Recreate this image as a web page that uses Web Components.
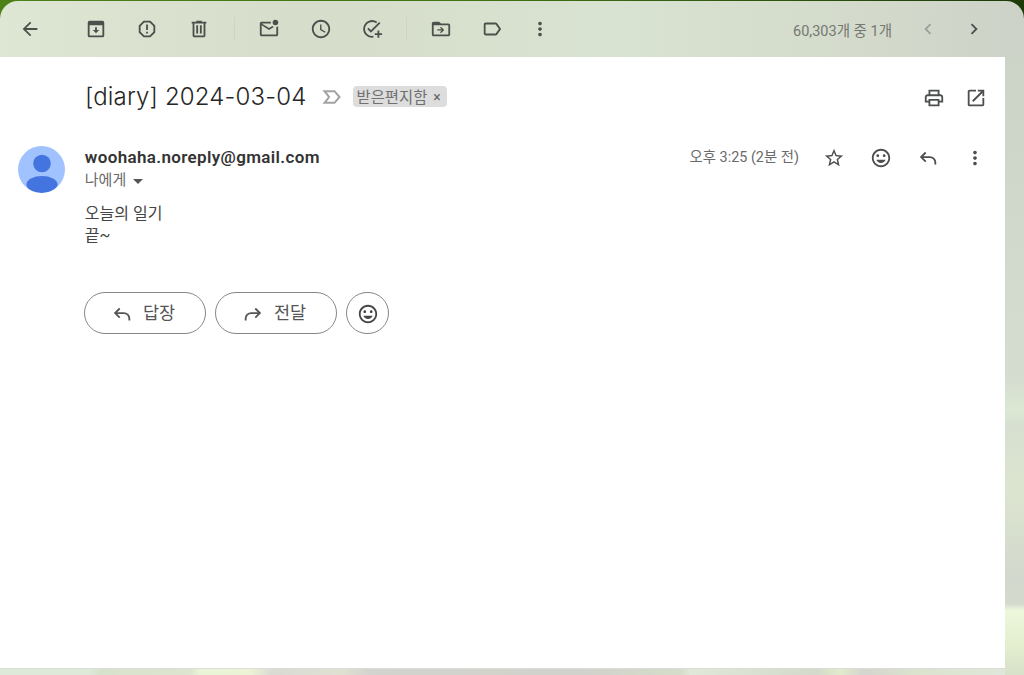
<!DOCTYPE html>
<html lang="ko">
<head>
<meta charset="utf-8">
<title>[diary] 2024-03-04</title>
<style>
  html,body{margin:0;padding:0;height:100%;overflow:hidden}
  body{font-family:Roboto,"Noto Sans CJK KR",sans-serif}
</style>
</head>
<body>
<mail-app>
  <mail-toolbar slot="toolbar">
    <icon-btn name="back" width="40" style="margin-right:20px"></icon-btn>
    <icon-btn name="archive"></icon-btn>
    <icon-btn name="report"></icon-btn>
    <icon-btn name="trash"></icon-btn>
    <tool-sep></tool-sep>
    <icon-btn name="unread"></icon-btn>
    <icon-btn name="clock"></icon-btn>
    <icon-btn name="task"></icon-btn>
    <tool-sep style="margin:0 8px"></tool-sep>
    <icon-btn name="move"></icon-btn>
    <icon-btn name="label"></icon-btn>
    <icon-btn name="more" width="43"></icon-btn>
    <page-count slot="right">60,303개 중 1개</page-count>
    <icon-btn slot="right" name="prev" width="46" faded></icon-btn>
    <icon-btn slot="right" name="next" width="46"></icon-btn>
  </mail-toolbar>

  <mail-subject slot="card">
    [diary] 2024-03-04
    <label-chip slot="chip">받은편지함</label-chip>
    <icon-btn slot="actions" name="print" width="42"></icon-btn>
    <icon-btn slot="actions" name="open" width="42"></icon-btn>
  </mail-subject>

  <mail-message slot="card" from="woohaha.noreply@gmail.com" to="나에게" time="오후 3:25 (2분 전)">
    <icon-btn slot="actions" name="star" width="47"></icon-btn>
    <icon-btn slot="actions" name="mood" width="47"></icon-btn>
    <icon-btn slot="actions" name="reply" width="47"></icon-btn>
    <icon-btn slot="actions" name="more" width="47"></icon-btn>
    <div>오늘의 일기</div>
    <div>끝~</div>
  </mail-message>

  <reply-bar slot="card">
    <pill-btn icon="reply">답장</pill-btn>
    <pill-btn icon="forward">전달</pill-btn>
    <pill-btn icon="mood"></pill-btn>
  </reply-bar>
</mail-app>

<script>
const ICONS = {
  back:'<path d="M20 11H7.83l5.59-5.59L12 4l-8 8 8 8 1.41-1.41L7.83 13H20v-2z"/>',
  archive:'<path fill-rule="evenodd" d="M5 3h14a2 2 0 0 1 2 2v14a2 2 0 0 1-2 2H5a2 2 0 0 1-2-2V5a2 2 0 0 1 2-2zM5 8v11h14V8z"/><path d="M11 10h2v3h2.5L12 16.5 8.5 13H11z"/>',
  report:'<path d="M15.73 3H8.27L3 8.27v7.46L8.27 21h7.46L21 15.73V8.27L15.73 3zM19 14.9L14.9 19H9.1L5 14.9V9.1L9.1 5h5.8L19 9.1v5.8z"/><path d="M11 7h2v6h-2zM11 15h2v2h-2z"/>',
  trash:'<path d="M15 4V3H9v1H4v2h1v13c0 1.1.9 2 2 2h10c1.1 0 2-.9 2-2V6h1V4h-5zm2 15H7V6h10v13zM9 8h2v9H9zm4 0h2v9h-2z"/>',
  unread:'<path d="M22 8.98V18c0 1.1-.9 2-2 2H4c-1.1 0-2-.9-2-2V6c0-1.1.9-2 2-2h10.1c-.06.32-.1.66-.1 1s.04.68.1 1H4l8 5 3.67-2.29c.47.43 1.02.76 1.63.98L12 13 4 8v10h16V9.9c.74-.15 1.42-.48 2-.92z"/><circle cx="19" cy="5" r="3"/>',
  clock:'<path d="M11.99 2C6.47 2 2 6.48 2 12s4.47 10 9.99 10C17.52 22 22 17.52 22 12S17.52 2 11.99 2zM12 20c-4.42 0-8-3.58-8-8s3.58-8 8-8 8 3.58 8 8-3.58 8-8 8zm.5-13H11v6l5.25 3.15.75-1.23-4.5-2.67z"/>',
  task:'<g fill="none" stroke="currentColor" stroke-width="2"><path d="M13.5 20.4a8.6 8.6 0 1 1 3.6-15.4"/><path d="M7.5 11.3l3.3 3.3L20.5 5"/><path d="M19 13.5v8M15 17.5h8"/></g>',
  move:'<path d="M20 6h-8l-2-2H4c-1.1 0-2 .9-2 2v12c0 1.1.9 2 2 2h16c1.1 0 2-.9 2-2V8c0-1.1-.9-2-2-2zm0 12H4V8h16v10z"/><path d="M12 9.5l-1 1 1.8 1.8H8v1.4h4.8L11 15.5l1 1 3.5-3.5z"/>',
  label:'<path d="M17.63 5.84C17.27 5.33 16.67 5 16 5L5 5.01C3.9 5.01 3 5.9 3 7v10c0 1.1.9 1.99 2 1.99L16 19c.67 0 1.27-.33 1.63-.84L22 12l-4.37-6.16zM16 17H5V7h11l3.55 5L16 17z"/>',
  more:'<path d="M12 8c1.1 0 2-.9 2-2s-.9-2-2-2-2 .9-2 2 .9 2 2 2zm0 2c-1.1 0-2 .9-2 2s.9 2 2 2 2-.9 2-2-.9-2-2-2zm0 6c-1.1 0-2 .9-2 2s.9 2 2 2 2-.9 2-2-.9-2-2-2z"/>',
  prev:'<path d="M15.41 7.41L14 6l-6 6 6 6 1.41-1.41L10.83 12z"/>',
  next:'<path d="M10 6L8.59 7.41 13.17 12l-4.58 4.59L10 18l6-6z"/>',
  print:'<path d="M19 8h-1V3H6v5H5c-1.66 0-3 1.34-3 3v6h4v4h12v-4h4v-6c0-1.66-1.34-3-3-3zM8 5h8v3H8V5zm8 12v2H8v-4h8v2zm2-2v-2H6v2H4v-4c0-.55.45-1 1-1h14c.55 0 1 .45 1 1v4h-2z"/>',
  open:'<path d="M19 19H5V5h7V3H5c-1.11 0-2 .9-2 2v14c0 1.1.89 2 2 2h14c1.1 0 2-.9 2-2v-7h-2v7zM14 3v2h3.59l-9.83 9.83 1.41 1.41L19 6.41V10h2V3h-7z"/>',
  star:'<path d="M22 9.24l-7.19-.62L12 2 9.19 8.63 2 9.24l5.46 4.73L5.82 21 12 17.27 18.18 21l-1.63-7.03L22 9.24zM12 15.4l-3.76 2.27 1-4.28-3.32-2.88 4.38-.38L12 6.1l1.71 4.04 4.38.38-3.32 2.88 1 4.28L12 15.4z"/>',
  mood:'<path d="M11.99 2C6.47 2 2 6.48 2 12s4.47 10 9.99 10C17.52 22 22 17.52 22 12S17.52 2 11.99 2zM12 20c-4.42 0-8-3.58-8-8s3.58-8 8-8 8 3.58 8 8-3.58 8-8 8zm3.5-9c.83 0 1.5-.67 1.5-1.5S16.33 8 15.5 8 14 8.67 14 9.5s.67 1.5 1.5 1.5zm-7 0c.83 0 1.5-.67 1.5-1.5S9.33 8 8.5 8 7 8.67 7 9.5 7.67 11 8.5 11zm3.5 6.5c2.33 0 4.31-1.46 5.11-3.5H6.89c.8 2.04 2.78 3.5 5.11 3.5z"/>',
  reply:'<g fill="none" stroke="currentColor" stroke-width="2"><path d="M9.5 6l-5 5 5 5"/><path d="M5 11h9a6 6 0 0 1 6 6v2"/></g>',
  forward:'<g fill="none" stroke="currentColor" stroke-width="2"><path d="M14.5 6l5 5-5 5"/><path d="M19 11h-9a6 6 0 0 0-6 6v2"/></g>'
}

function svgIcon(name,size){
  return `<svg width="${size}" height="${size}" viewBox="0 0 24 24" fill="currentColor">${ICONS[name]}</svg>`
}

class MailApp extends HTMLElement{
  constructor(){
    super()
    this.attachShadow({mode:"open"})
    this.shadowRoot.innerHTML = `
      <style>
        :host{display:block;width:1024px;height:675px;overflow:hidden;
          background:linear-gradient(90deg,#4e8018 0,#3f7014 50%,#1d3a06 100%)}
        .panel{margin-top:1px;height:674px;border-radius:18px 18px 0 0;overflow:hidden;
          display:grid;grid-template-columns:1005px 19px;grid-template-rows:56px 611px 7px;
          background:linear-gradient(90deg,#dee6d4 0,#d6ddca 30%,#d9e3d1 60%,#d3dacb 85%,#cdd2c8 100%)}
        .bar{grid-column:1 / 3}
        .card{background:#fff;display:flex;flex-direction:column}
        .side{background:linear-gradient(180deg,#ccd3c7 0,#d5dcd0 52%,#dbe8d3 57%,#d7dfd0 60%,#dce5cf 70%,#d2d8cd 84%,#d3dacd 88.5%,#ecf7dc 89.5%,#e4efd0 95%,#d7e0c9 100%);grid-row:2 / 4;grid-column:2}
        .bottom{box-shadow:inset 0 1px 0 #dcdcd8;background:linear-gradient(90deg,#dfe9da 0,#dfe9da 90px,#d7e2cd 100px,#dde4cf 190px,#e9f4d8 200px,#ecf3d5 250px,#d9dbd4 272px,#e0e0d2 340px,#d3d3cf 372px,#d3d3cc 497px,#d1d1cd 575px,#d5ddc9 680px,#dfe8d9 690px,#d3dacb 817px,#e2ebcc 840px,#d4d5cf 863px,#dbe3ce 915px,#dfe7da 1005px)}
      </style>
      <div class="panel">
        <div class="bar"><slot name="toolbar"></slot></div>
        <div class="card"><slot name="card"></slot></div>
        <div class="side"></div>
        <div class="bottom"></div>
      </div>`
  }
}
customElements.define("mail-app",MailApp)

class MailToolbar extends HTMLElement{
  constructor(){
    super()
    this.attachShadow({mode:"open"})
    this.shadowRoot.innerHTML = `
      <style>
        :host{display:flex;align-items:center;height:56px;padding:0 27px 0 10px;box-sizing:border-box}
        .left,.right{display:flex;align-items:center}
        .right{margin-left:auto}
      </style>
      <div class="left"><slot></slot></div>
      <div class="right"><slot name="right"></slot></div>`
  }
}
customElements.define("mail-toolbar",MailToolbar)

class IconBtn extends HTMLElement{
  connectedCallback(){
    if(this.shadowRoot) return
    this.attachShadow({mode:"open"})
    let w = this.getAttribute("width") || 51.5
    let name = this.getAttribute("name")
    this.shadowRoot.innerHTML = `
      <style>
        :host{display:flex;align-items:center;justify-content:center;width:${w}px;height:40px;color:#4c504c;flex:none}
        :host([faded]){color:#9aa098}
        svg{display:block}
      </style>
      ${svgIcon(name,22)}`
  }
}
customElements.define("icon-btn",IconBtn)

class ToolSep extends HTMLElement{
  constructor(){
    super()
    this.attachShadow({mode:"open"})
    this.shadowRoot.innerHTML = `<style>:host{display:block;width:1px;height:24px;margin:0 9px;background:#ced5c6}</style>`
  }
}
customElements.define("tool-sep",ToolSep)

class PageCount extends HTMLElement{
  constructor(){
    super()
    this.attachShadow({mode:"open"})
    this.shadowRoot.innerHTML = `<style>:host{display:block;font-size:14.5px;color:#747872;margin-right:13px}</style><slot></slot>`
  }
}
customElements.define("page-count",PageCount)

class LabelChip extends HTMLElement{
  constructor(){
    super()
    this.attachShadow({mode:"open"})
    this.shadowRoot.innerHTML = `
      <style>
        :host{display:inline-flex;align-items:center;height:21px;margin-top:-2px;padding:0 6px 0 4px;gap:6px;border-radius:4px;
          background:#dddddd;color:#707070;font-size:15.4px;font-weight:400}
        .t{margin-top:-2px}
        .x{font-size:14px;color:#666;line-height:1}
      </style>
      <span class="t"><slot></slot></span><span class="x">×</span>`
  }
}
customElements.define("label-chip",LabelChip)

class MailSubject extends HTMLElement{
  constructor(){
    super()
    this.attachShadow({mode:"open"})
    this.shadowRoot.innerHTML = `
      <style>
        :host{display:flex;align-items:center;height:81px;padding:0 8px 0 85px;box-sizing:border-box;color:#262626}
        h2{margin:-2px 0 0;font:300 24px Inter,"Noto Sans CJK KR",sans-serif;letter-spacing:.15px;white-space:nowrap}
        svg{margin:-2px 11px 0 15px;flex:none}
        .actions{margin-left:auto;display:flex}
      </style>
      <h2><slot></slot></h2>
      <svg width="20" height="20" viewBox="0 0 24 24" fill="none" stroke="#a3a3a3" stroke-width="2.4"><path d="M3 5h12l6 7-6 7H3l5.5-7z"/></svg>
      <slot name="chip"></slot>
      <div class="actions"><slot name="actions"></slot></div>`
  }
}
customElements.define("mail-subject",MailSubject)

class MailMessage extends HTMLElement{
  connectedCallback(){
    if(this.shadowRoot) return
    this.attachShadow({mode:"open"})
    this.shadowRoot.innerHTML = `
      <style>
        :host{display:grid;grid-template-columns:47px 1fr;column-gap:19.5px;padding:8px 7px 0 18.3px;color:#1f1f1f}
        .avatar{display:block;width:47px;height:47px;border-radius:50%;overflow:hidden;background:#a0c3ff}
        .head{display:flex;align-items:flex-start;height:53px}
        .who{flex:1;min-width:0}
        .from{font-size:17px;font-weight:600;line-height:22px;color:#333;letter-spacing:.35px}
        .to{font-size:15px;line-height:24px;color:#6a6a6a;display:flex;align-items:center;gap:6px}
        .to i{width:0;height:0;border:5px solid transparent;border-top-color:#555;border-bottom:0;margin:2px 0 0 1px}
        .time{font-size:14.4px;color:#6a6a6a;line-height:22px;margin:1px 11px 0 0}
        .actions{display:flex;margin-top:-8px}
        .body{margin-top:4px;font-size:16px;line-height:22px;color:#444}
      </style>
      <svg class="avatar" viewBox="0 0 47 47"><circle cx="24" cy="17.5" r="8.8" fill="#4374e0"/><ellipse cx="24" cy="38.5" rx="15.5" ry="8.5" fill="#4374e0"/></svg>
      <div>
        <div class="head">
          <div class="who">
            <div class="from">${this.getAttribute("from")}</div>
            <div class="to">${this.getAttribute("to")}<i></i></div>
          </div>
          <div class="time">${this.getAttribute("time")}</div>
          <div class="actions"><slot name="actions"></slot></div>
        </div>
        <div class="body"><slot></slot></div>
      </div>`
  }
}
customElements.define("mail-message",MailMessage)

class ReplyBar extends HTMLElement{
  constructor(){
    super()
    this.attachShadow({mode:"open"})
    this.shadowRoot.innerHTML = `<style>:host{display:flex;gap:9px;margin-top:45px;padding-left:84px}</style><slot></slot>`
  }
}
customElements.define("reply-bar",ReplyBar)

class PillBtn extends HTMLElement{
  connectedCallback(){
    if(this.shadowRoot) return
    this.attachShadow({mode:"open"})
    let icon = this.getAttribute("icon")
    let solo = this.textContent.trim() === ""
    this.shadowRoot.innerHTML = `
      <style>
        :host{display:flex;align-items:center;justify-content:center;box-sizing:border-box;height:42px;
          width:${solo ? 43 : 122}px;gap:${solo ? 0 : 10}px;border:1px solid #858885;border-radius:21px;
          color:#555;font-size:17.5px}
        svg{display:block;flex:none;margin-top:1px;${solo ? "color:#444746" : ""}}
        .txt{margin:-4px 4px 0 0}
      </style>
      ${svgIcon(icon,22)}${solo ? "" : '<span class="txt"><slot></slot></span>'}`
  }
}
customElements.define("pill-btn",PillBtn)
</script>
</body>
</html>
